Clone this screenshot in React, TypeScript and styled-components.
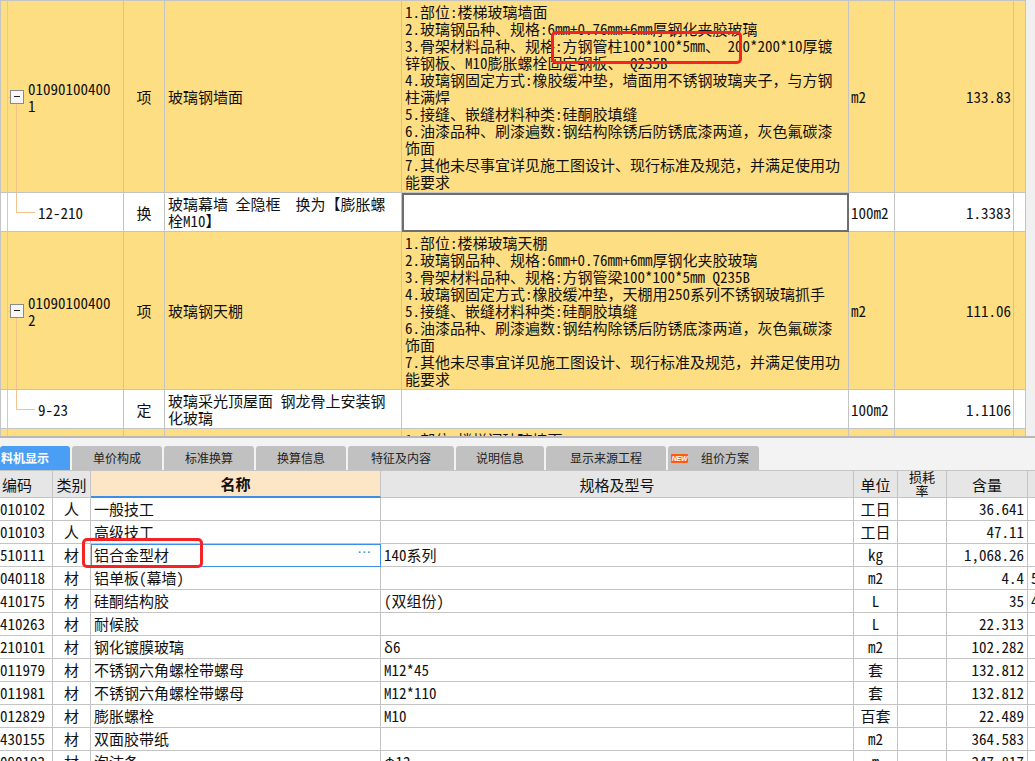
import React from 'react';
import styled, { createGlobalStyle, css } from 'styled-components';

const FONT = `"Noto Sans Mono CJK SC", "Noto Sans CJK SC", "Noto Sans", sans-serif`;
const UI_FONT = `"Noto Sans CJK SC", "Noto Sans", sans-serif`;
const GRID = '#c4c4c4';
const TREE = '#f5c48c';
const YELLOW = '#fede82';

const GlobalStyle = createGlobalStyle`
  html, body { margin: 0; padding: 0; background: #fff; overflow: hidden; }
  body { font-family: ${FONT}; font-size: 15px; color: #111; }
  * { box-sizing: border-box; }
`;

const Page = styled.div`
  position: relative;
  width: 1035px;
  height: 761px;
  overflow: hidden;
  display: flex;
  flex-direction: column;
  background: #fff;
`;

/* ---------- top grid ---------- */
const TopPane = styled.div`
  flex: none;
  height: 438px;
  display: flex;
  border-bottom: 2px solid #b8b8b8;
  overflow: hidden;
`;

const TopGrid = styled.div`
  flex: none;
  width: 1026px;
  border-top: 1px solid ${GRID};
  border-left: 1px solid ${GRID};
`;

const ScrollTrack = styled.div`
  flex: 1;
  background: #f0f0f0;
`;

const TopRow = styled.div<{ $tone: 'item' | 'sub' }>`
  display: grid;
  grid-template-columns: 123px 41px 237px 447px 46px 119px 12px;
  background: ${p => (p.$tone === 'item' ? YELLOW : '#fff')};
`;

type Align = 'start' | 'center' | 'end';

const TopCell = styled.div<{ $align?: Align; $valign?: Align; $padX?: number }>`
  position: relative;
  min-width: 0;
  display: flex;
  flex-direction: column;
  justify-content: ${p => (p.$valign === 'start' ? 'flex-start' : 'center')};
  align-items: ${p =>
    p.$align === 'center' ? 'center' : p.$align === 'end' ? 'flex-end' : 'flex-start'};
  padding: 2px ${p => p.$padX ?? 3}px;
  border-right: 1px solid ${GRID};
  border-bottom: 1px solid ${GRID};
  line-height: 17px;
  white-space: pre;
  overflow: hidden;
`;

const SelectedCell = styled(TopCell)`
  outline: 2px solid #6e6e6e;
  outline-offset: -2px;
`;

const TreeCell = styled.div<{ $kind: 'parent' | 'child' | 'root' }>`
  position: relative;
  display: flex;
  align-items: center;
  border-right: 1px solid ${GRID};
  border-bottom: 1px solid ${GRID};
  line-height: 17px;
  white-space: nowrap;
  overflow: hidden;
  &::before {
    content: '';
    position: absolute;
    left: 6px;
    top: 0;
    bottom: 0;
    width: 1px;
    background: ${TREE};
  }
  ${p =>
    p.$kind === 'parent' &&
    css`
      &::after {
        content: '';
        position: absolute;
        left: 15px;
        top: calc(50% + 7px);
        bottom: 0;
        width: 1px;
        background: ${TREE};
      }
    `}
  ${p =>
    p.$kind === 'child' &&
    css`
      &::after {
        content: '';
        position: absolute;
        left: 15px;
        top: 0;
        height: 50%;
        width: 18px;
        border-left: 1px solid ${TREE};
        border-bottom: 1px solid ${TREE};
      }
    `}
`;

const Toggle = styled.span`
  position: relative;
  flex: none;
  width: 14px;
  height: 14px;
  margin: 0 4px 0 9px;
  border: 1px solid #8a8a8a;
  background: #f6f6f6;
  display: flex;
  align-items: center;
  justify-content: center;
  &::before {
    content: '';
    width: 6px;
    height: 1px;
    background: #222;
  }
  &::after {
    content: '';
    position: absolute;
    left: -4px;
    top: 50%;
    width: 3px;
    height: 1px;
    background: ${TREE};
  }
`;

const CodeText = styled.div<{ $child?: boolean }>`
  display: flex;
  flex-direction: column;
  margin-left: ${p => (p.$child ? 37 : 0)}px;
`;

/* ---------- tabs ---------- */
const TabBar = styled.div`
  flex: none;
  height: 32px;
  display: flex;
  align-items: flex-end;
  gap: 2px;
  background: #f3f3f3;
`;

const Tab = styled.div<{ $active?: boolean; $w: number; $lead?: boolean }>`
  flex: none;
  width: ${p => p.$w}px;
  height: 24px;
  display: flex;
  align-items: center;
  justify-content: ${p => (p.$active || p.$lead ? 'flex-start' : 'center')};
  gap: 13px;
  padding-left: ${p => (p.$lead ? 3 : p.$active ? 1 : 0)}px;
  border-radius: 3px 3px 0 0;
  background: ${p => (p.$active ? '#4a9ff5' : '#c1c1c1')};
  color: ${p => (p.$active ? '#fff' : '#222')};
  font-family: ${UI_FONT};
  font-size: 12px;
  line-height: 16px;
  font-weight: ${p => (p.$active ? 700 : 400)};
  white-space: nowrap;
  overflow: hidden;
`;

const NewBadge = styled.span`
  flex: none;
  width: 17px;
  height: 9px;
  display: inline-flex;
  align-items: center;
  justify-content: center;
  background: #ff5a12;
  border-radius: 1px;
  color: #fff;
  font-family: "Liberation Sans", Arial, sans-serif;
  font-size: 7px;
  font-weight: 700;
  font-style: italic;
  line-height: 9px;
  letter-spacing: -0.2px;
`;

/* ---------- bottom grid ---------- */
const BottomTable = styled.div`
  flex: 1;
  overflow: hidden;
  border-top: 1px solid ${GRID};
`;

const bottomCols = '53px 38px 290px 473px 44px 49px 81px 40px';

const HeadRow = styled.div`
  display: grid;
  grid-template-columns: ${bottomCols};
  height: 27px;
  background: #e6e6e6;
`;

const HeadCell = styled.div<{ $align?: Align; $hot?: boolean }>`
  display: flex;
  align-items: center;
  justify-content: ${p => (p.$align === 'start' ? 'flex-start' : 'center')};
  padding-left: ${p => (p.$align === 'start' ? 2 : 0)}px;
  border-right: 1px solid ${GRID};
  border-bottom: ${p => (p.$hot ? '2px solid #3d8fe6' : `1px solid ${GRID}`)};
  background: ${p => (p.$hot ? '#fde6c6' : 'transparent')};
  font-weight: ${p => (p.$hot ? 700 : 400)};
  line-height: 17px;
  white-space: nowrap;
  overflow: hidden;
`;

const StackedHead = styled(HeadCell)`
  flex-direction: column;
  font-size: 13px;
  line-height: 14px;
`;

const BodyRow = styled.div`
  display: grid;
  grid-template-columns: ${bottomCols};
  height: 23px;
  background: #fff;
`;

const BodyCell = styled.div<{ $align?: Align; $selected?: boolean }>`
  display: flex;
  align-items: center;
  justify-content: ${p =>
    p.$align === 'center' ? 'center' : p.$align === 'end' ? 'flex-end' : 'space-between'};
  padding: 0 3px 0 ${p => (p.$align === 'end' ? 0 : 3)}px;
  border-right: 1px solid ${GRID};
  border-bottom: 1px solid ${GRID};
  line-height: 22px;
  white-space: nowrap;
  overflow: hidden;
  ${p =>
    p.$selected &&
    css`
      outline: 1px solid #3d8ee8;
      outline-offset: -1px;
    `}
`;

const CodeCell = styled(BodyCell)`
  direction: rtl;
  justify-content: flex-start;
  padding: 0 7px 0 0;
`;

const MoreDots = styled.span`
  color: #3d8ee8;
  font-family: "Liberation Sans", Arial, sans-serif;
  font-size: 11px;
  font-weight: 700;
  letter-spacing: 1px;
  margin-right: 5px;
  line-height: 10px;
  align-self: center;
  transform: translateY(-3px);
`;

/* ---------- annotations ---------- */
const Mark = styled.div<{ $x: number; $y: number; $w: number; $h: number }>`
  position: absolute;
  left: ${p => p.$x}px;
  top: ${p => p.$y}px;
  width: ${p => p.$w}px;
  height: ${p => p.$h}px;
  border: 3px solid #f42424;
  border-radius: 5px;
  pointer-events: none;
`;

/* ---------- data ---------- */
type TopItem = {
  kind: 'parent' | 'child' | 'root';
  code: string[];
  type: string;
  name: string[];
  desc: string[];
  unit: string;
  qty: string;
  selected?: boolean;
};

const topItems: TopItem[] = [
  {
    kind: 'parent',
    code: ['01090100400', '1'],
    type: '项',
    name: ['玻璃钢墙面'],
    desc: [
      '1.部位:楼梯玻璃墙面',
      '2.玻璃钢品种、规格:6mm+0.76mm+6mm厚钢化夹胶玻璃',
      '3.骨架材料品种、规格:方钢管柱100*100*5mm、 200*200*10厚镀',
      '锌钢板、M10膨胀螺栓固定钢板、 Q235B',
      '4.玻璃钢固定方式:橡胶缓冲垫，墙面用不锈钢玻璃夹子，与方钢',
      '柱满焊',
      '5.接缝、嵌缝材料种类:硅酮胶填缝',
      '6.油漆品种、刷漆遍数:钢结构除锈后防锈底漆两道，灰色氟碳漆',
      '饰面',
      '7.其他未尽事宜详见施工图设计、现行标准及规范，并满足使用功',
      '能要求',
    ],
    unit: 'm2',
    qty: '133.83',
  },
  {
    kind: 'child',
    code: ['12-210'],
    type: '换',
    name: ['玻璃幕墙 全隐框  换为【膨胀螺', '栓M10】'],
    desc: [],
    unit: '100m2',
    qty: '1.3383',
    selected: true,
  },
  {
    kind: 'parent',
    code: ['01090100400', '2'],
    type: '项',
    name: ['玻璃钢天棚'],
    desc: [
      '1.部位:楼梯玻璃天棚',
      '2.玻璃钢品种、规格:6mm+0.76mm+6mm厚钢化夹胶玻璃',
      '3.骨架材料品种、规格:方钢管梁100*100*5mm Q235B',
      '4.玻璃钢固定方式:橡胶缓冲垫，天棚用250系列不锈钢玻璃抓手',
      '5.接缝、嵌缝材料种类:硅酮胶填缝',
      '6.油漆品种、刷漆遍数:钢结构除锈后防锈底漆两道，灰色氟碳漆',
      '饰面',
      '7.其他未尽事宜详见施工图设计、现行标准及规范，并满足使用功',
      '能要求',
    ],
    unit: 'm2',
    qty: '111.06',
  },
  {
    kind: 'child',
    code: ['9-23'],
    type: '定',
    name: ['玻璃采光顶屋面 钢龙骨上安装钢', '化玻璃'],
    desc: [],
    unit: '100m2',
    qty: '1.1106',
  },
  {
    kind: 'root',
    code: [],
    type: '',
    name: [],
    desc: ['1.部位:楼梯间玻璃墙面'],
    unit: '',
    qty: '',
  },
];

const tabs: { label: string; w: number; active?: boolean; badge?: boolean }[] = [
  { label: '料机显示', w: 70, active: true },
  { label: '单价构成', w: 90 },
  { label: '标准换算', w: 90 },
  { label: '换算信息', w: 90 },
  { label: '特征及内容', w: 106 },
  { label: '说明信息', w: 88 },
  { label: '显示来源工程', w: 120 },
  { label: '组价方案', w: 91, badge: true },
];

type Mat = {
  code: string;
  cat: string;
  name: string;
  spec: string;
  unit: string;
  qty: string;
  extra?: string;
  selected?: boolean;
};

const mats: Mat[] = [
  { code: '00010102', cat: '人', name: '一般技工', spec: '', unit: '工日', qty: '36.641' },
  { code: '00010103', cat: '人', name: '高级技工', spec: '', unit: '工日', qty: '47.11' },
  { code: '01510111', cat: '材', name: '铝合金型材', spec: '140系列', unit: 'kg', qty: '1,068.26', selected: true },
  { code: '01040118', cat: '材', name: '铝单板(幕墙)', spec: '', unit: 'm2', qty: '4.4', extra: '5' },
  { code: '14410175', cat: '材', name: '硅酮结构胶', spec: '(双组份)', unit: 'L', qty: '35', extra: '4' },
  { code: '14410263', cat: '材', name: '耐候胶', spec: '', unit: 'L', qty: '22.313' },
  { code: '06210101', cat: '材', name: '钢化镀膜玻璃', spec: 'δ6', unit: 'm2', qty: '102.282' },
  { code: '03011979', cat: '材', name: '不锈钢六角螺栓带螺母', spec: 'M12*45', unit: '套', qty: '132.812' },
  { code: '03011981', cat: '材', name: '不锈钢六角螺栓带螺母', spec: 'M12*110', unit: '套', qty: '132.812' },
  { code: '03012829', cat: '材', name: '膨胀螺栓', spec: 'M10', unit: '百套', qty: '22.489' },
  { code: '02430155', cat: '材', name: '双面胶带纸', spec: '', unit: 'm2', qty: '364.583' },
  { code: '02090193', cat: '材', name: '泡沫条', spec: 'φ12', unit: 'm', qty: '247.817' },
];

export default function App() {
  return (
    <>
      <GlobalStyle />
      <Page>
        <TopPane>
          <TopGrid>
            {topItems.map((it, i) => {
              const Desc = it.selected ? SelectedCell : TopCell;
              return (
                <TopRow key={i} $tone={it.kind === 'child' ? 'sub' : 'item'}>
                  <TreeCell $kind={it.kind}>
                    {it.kind === 'parent' && <Toggle />}
                    {it.code.length > 0 && (
                      <CodeText $child={it.kind === 'child'}>
                        {it.code.map((c, j) => (
                          <span key={j}>{c}</span>
                        ))}
                      </CodeText>
                    )}
                  </TreeCell>
                  <TopCell $align="center">{it.type}</TopCell>
                  <TopCell>
                    {it.name.map((n, j) => (
                      <span key={j}>{n}</span>
                    ))}
                  </TopCell>
                  <Desc $valign="start">
                    {it.desc.map((d, j) => (
                      <span key={j}>{d}</span>
                    ))}
                  </Desc>
                  <TopCell $padX={2}>{it.unit}</TopCell>
                  <TopCell $align="end" $padX={2}>
                    {it.qty}
                  </TopCell>
                  <TopCell />
                </TopRow>
              );
            })}
          </TopGrid>
          <ScrollTrack />
        </TopPane>

        <TabBar>
          {tabs.map(t => (
            <Tab key={t.label} $w={t.w} $active={t.active} $lead={t.badge}>
              {t.badge && <NewBadge>NEW</NewBadge>}
              <span>{t.label}</span>
            </Tab>
          ))}
        </TabBar>

        <BottomTable>
          <HeadRow>
            <HeadCell $align="start">编码</HeadCell>
            <HeadCell>类别</HeadCell>
            <HeadCell $hot>名称</HeadCell>
            <HeadCell>规格及型号</HeadCell>
            <HeadCell>单位</HeadCell>
            <StackedHead>
              <span>损耗</span>
              <span>率</span>
            </StackedHead>
            <HeadCell>含量</HeadCell>
            <HeadCell />
          </HeadRow>
          {mats.map((m, i) => (
            <BodyRow key={i}>
              <CodeCell>{m.code}</CodeCell>
              <BodyCell $align="center">{m.cat}</BodyCell>
              <BodyCell $selected={m.selected}>
                <span>{m.name}</span>
                {m.selected && <MoreDots>···</MoreDots>}
              </BodyCell>
              <BodyCell>
                <span>{m.spec}</span>
              </BodyCell>
              <BodyCell $align="center">{m.unit}</BodyCell>
              <BodyCell $align="center" />
              <BodyCell $align="end">{m.qty}</BodyCell>
              <BodyCell>
                <span>{m.extra ?? ''}</span>
              </BodyCell>
            </BodyRow>
          ))}
        </BottomTable>

        <Mark $x={551} $y={31} $w={191} $h={33} />
        <Mark $x={82} $y={538} $w={121} $h={30} />
      </Page>
    </>
  );
}
